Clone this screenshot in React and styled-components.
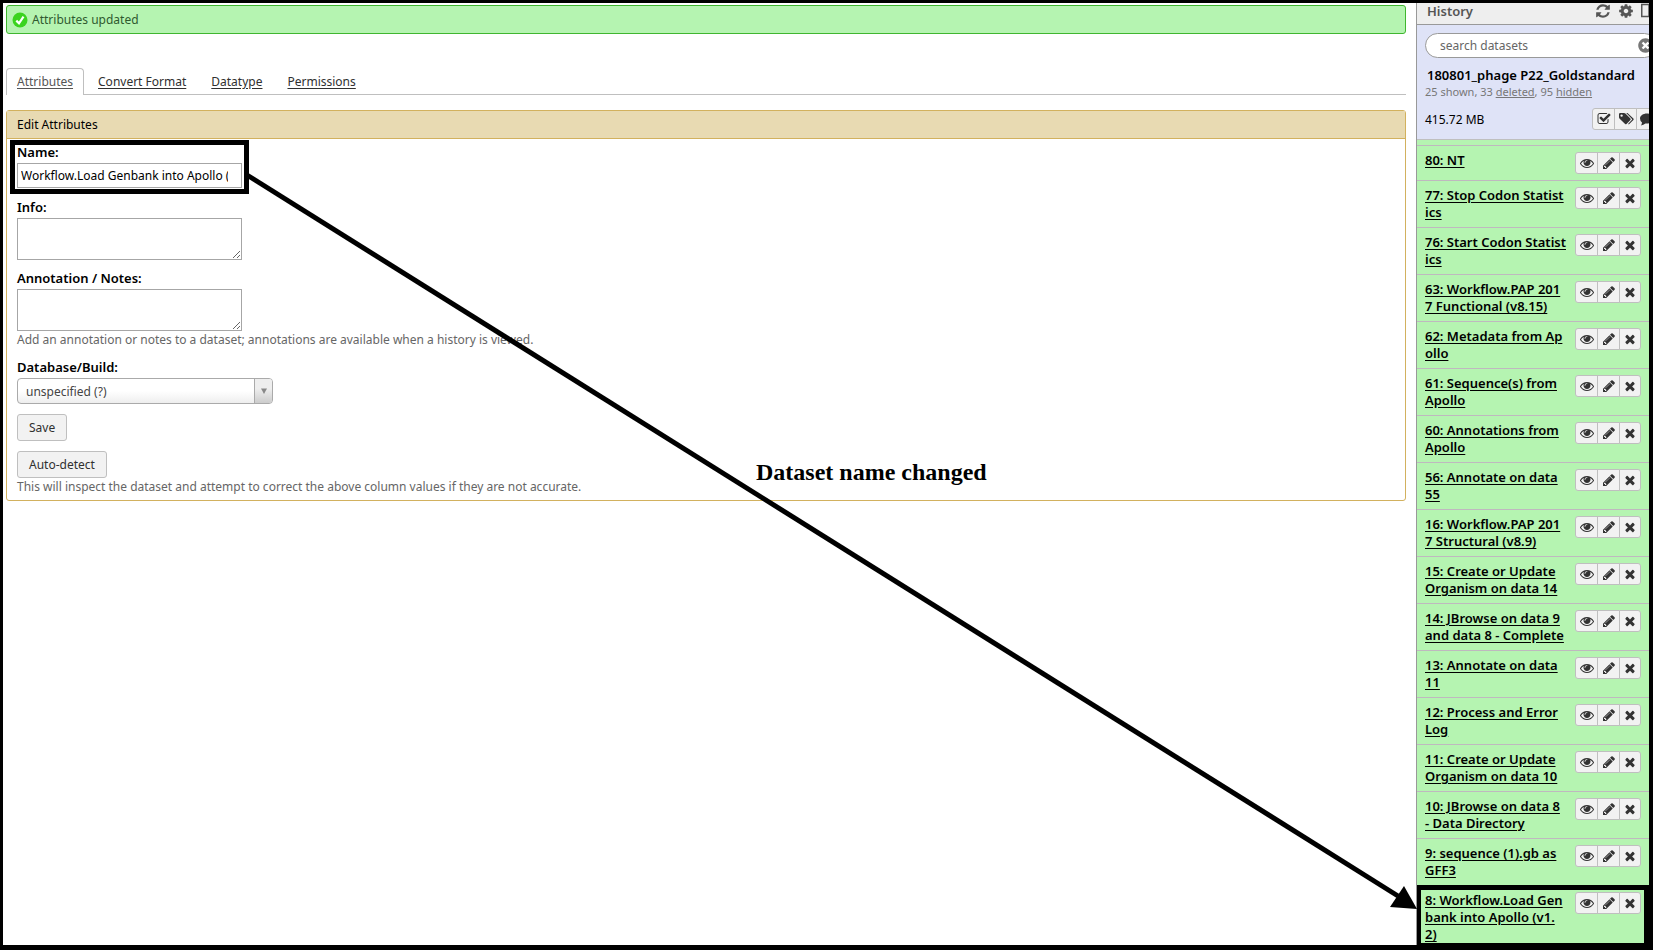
import React from "react";
import styled, { createGlobalStyle, css } from "styled-components";
import { FaTimesCircle } from "react-icons/fa";

const Global = createGlobalStyle`
  *, *::before, *::after { box-sizing: border-box; }
  body { margin: 0; background: #fff; }
  body, button, input, textarea, select {
    font-family: "Lucida Grande", "Noto Sans", "Open Sans", sans-serif;
    font-size: 12px;
  }
`;

const Frame = styled.div`
  position: relative;
  display: flex;
  height: 100vh;
  overflow: hidden;
  border: 3px solid #000;
  border-right-width: 4px;
  border-bottom-width: 5px;
  color: #000;
  line-height: 17px;
`;

/* ---------- centre column ---------- */

const Main = styled.main`
  flex: 1;
  min-width: 0;
  padding: 2px 10px 0 3px;
`;

const Message = styled.div`
  display: flex;
  align-items: center;
  gap: 4px;
  height: 29px;
  padding: 0 5px;
  border: 1px solid #3fb62f;
  border-radius: 3px;
  background: #b5f4b1;
  color: #2f5a2f;
`;

const Tabs = styled.nav`
  display: flex;
  height: 27px;
  margin-top: 34px;
  border-bottom: 1px solid #bfbfbf;
`;

const Tab = styled.a`
  height: 27px;
  margin-right: 3px;
  padding: 4px 10px 0;
  border: 1px solid transparent;
  border-bottom: 0;
  border-radius: 4px 4px 0 0;
  color: #303030;
  text-underline-offset: 2px;
  ${(p) =>
    p.$active &&
    css`
      border-color: #bfbfbf;
      background: #fff;
      color: #555;
    `}
`;

const Panel = styled.section`
  margin-top: 15px;
  border: 1px solid #d2b15e;
  border-radius: 3px;
`;

const PanelTitle = styled.h1`
  margin: 0;
  padding: 5px 10px;
  border-bottom: 1px solid #d2b15e;
  background: #e8dab2;
  font-size: 12px;
  font-weight: 400;
  line-height: 17px;
`;

const Form = styled.form`
  display: flex;
  flex-direction: column;
  align-items: flex-start;
  padding: 4px 10px;
`;

const Field = styled.div`
  position: relative;
  display: flex;
  flex-direction: column;
  margin-bottom: ${(p) => p.$gap || 9}px;
`;

const Label = styled.label`
  margin-bottom: 2px;
  font-size: 13px;
  font-weight: 600;
  line-height: 18px;
`;

const box = css`
  width: 225px;
  margin: 0;
  border: 1px solid #a6a6a6;
  border-radius: 0;
  background: #fff;
  color: #000;
  outline: none;
`;

const TextInput = styled.input`
  ${box}
  height: 25px;
  padding: 0 13px 0 3px;
`;

const TextArea = styled.textarea`
  ${box}
  height: 42px;
  padding: 3px;
  resize: both;
`;

const Help = styled.p`
  margin: 0;
  color: #666;
  line-height: 18px;
`;

const SelectBox = styled.div`
  position: relative;
  width: 256px;
`;

const Select = styled.select`
  display: block;
  width: 100%;
  height: 26px;
  padding: 0 28px 0 8px;
  appearance: none;
  border: 1px solid #aaa;
  border-radius: 4px;
  background: linear-gradient(to top, #eee 0%, #fff 50%);
  color: #444;
`;

const SelectArrow = styled.span`
  position: absolute;
  top: 1px;
  right: 1px;
  bottom: 1px;
  display: grid;
  place-items: center;
  width: 18px;
  border-left: 1px solid #aaa;
  border-radius: 0 3px 3px 0;
  background: linear-gradient(to top, #ccc 0%, #eee 60%);
  pointer-events: none;
`;

const Button = styled.button`
  height: 27px;
  margin-bottom: ${(p) => p.$gap || 0}px;
  padding: 0 11px;
  border: 1px solid #bfbfbf;
  border-radius: 3px;
  background: #f2f2f2;
  color: #303030;
`;

/* ---------- history column ---------- */

const History = styled.aside`
  flex: none;
  width: 233px;
  overflow: hidden;
  border-left: 1px solid #999;
  background: #b5f4b1;
`;

const HistoryInner = styled.div`
  width: 256px;
`;

const HistoryHeader = styled.header`
  display: flex;
  height: 22px;
  padding: 0 0 0 10px;
  border-bottom: 1px solid #999;
  background: #eee;
  color: #555;
`;

const HistoryTitle = styled.h2`
  width: 168px;
  margin: 0;
  font-size: 13px;
  font-weight: 600;
  line-height: 17px;
`;

const HeaderTools = styled.div`
  display: flex;
  gap: 7px;
`;

const BareButton = styled.button`
  display: flex;
  height: 15px;
  padding: 0;
  border: 0;
  background: none;
  color: #555;
`;

const Controls = styled.div`
  height: 115px;
  padding: 8px 0 0 8px;
  border-bottom: 1px solid #bfbfbf;
  background: #dfe3f7;
`;

const Search = styled.div`
  position: relative;
  width: 232px;
`;

const SearchInput = styled.input`
  display: block;
  width: 100%;
  height: 25px;
  padding: 0 30px 0 14px;
  border: 1px solid #999;
  border-radius: 13px;
  background: #fff;
  outline: none;
  &::placeholder { color: #666; opacity: 1; }
`;

const ClearButton = styled(BareButton)`
  position: absolute;
  top: 5px;
  left: 213px;
  color: #777;
`;

const HistoryName = styled.h3`
  margin: 9px 0 0;
  padding-left: 2px;
  font-size: 13px;
  font-weight: 600;
  line-height: 17px;
  white-space: nowrap;
`;

const Counts = styled.div`
  color: #777;
  font-size: 11px;
  line-height: 16px;
  a { color: inherit; }
`;

const SizeRow = styled.div`
  display: flex;
  align-items: center;
  justify-content: space-between;
  width: 233px;
  margin-top: 8px;
`;

const ButtonGroup = styled.div`
  display: flex;
  flex: none;
`;

const IconButton = styled.button`
  display: grid;
  place-items: center;
  width: 23px;
  height: 22px;
  padding: 0;
  border: 1px solid #bfbfbf;
  background: #f2f2f2;
  color: #333;
  & + & { margin-left: -1px; }
  &:first-child { border-radius: 3px 0 0 3px; }
  &:last-child { width: 22px; border-radius: 0 3px 3px 0; }
`;

const List = styled.ul`
  margin: 0;
  padding: 5px 0 0;
  list-style: none;
`;

const Item = styled.li`
  position: relative;
  display: flex;
  justify-content: space-between;
  align-items: flex-start;
  width: 232px;
  padding: 6px 8px;
  border-top: 1px solid #bfb8bf;
`;

const ItemLink = styled.a`
  color: #000;
  font-size: 13px;
  font-weight: 600;
  text-underline-offset: 2px;
  white-space: pre;
`;

/* ---------- annotations over the page ---------- */

const Highlight = styled.div`
  position: absolute;
  inset: ${(p) => p.$inset};
  border: 5px solid #000;
  pointer-events: none;
`;

const ArrowLayer = styled.svg`
  position: absolute;
  top: -3px;
  left: -3px;
  overflow: visible;
  pointer-events: none;
`;

const Caption = styled.div`
  position: absolute;
  top: 456px;
  left: 753px;
  font-family: "Liberation Serif", serif;
  font-size: 24px;
  font-weight: 700;
  line-height: 27px;
  white-space: nowrap;
`;

const paths = {
  eye: "M1664 960q-152-236-381-353 61 104 61 225 0 185-131.5 316.5t-316.5 131.5-316.5-131.5-131.5-316.5q0-121 61-225-229 117-381 353 133 205 333.5 326.5t434.5 121.5 434.5-121.5 333.5-326.5zm-720-384q0-20-14-34t-34-14q-125 0-214.5 89.5t-89.5 214.5q0 20 14 34t34 14 34-14 14-34q0-86 61-147t147-61q20 0 34-14t14-34zm848 384q0 34-20 69-140 230-376.5 368.5t-499.5 138.5-499.5-139-376.5-368q-20-35-20-69t20-69q140-229 376.5-368t499.5-139 499.5 139 376.5 368q20 35 20 69z",
  pencil: "M491 1536l91-91-235-235-91 91v107h128v128h107zm523-928q0-22-22-22-10 0-17 7l-542 542q-7 7-7 17 0 22 22 22 10 0 17-7l542-542q7-7 7-17zm-54-192l416 416-832 832h-416v-416zm683 96q0 53-37 90l-166 166-416-416 166-165q36-38 90-38 53 0 91 38l235 234q37 39 37 91z",
  times: "M1490 1322q0 40-28 68l-136 136q-28 28-68 28t-68-28l-294-294-294 294q-28 28-68 28t-68-28l-136-136q-28-28-28-68t28-68l294-294-294-294q-28-28-28-68t28-68l136-136q28-28 68-28t68 28l294 294 294-294q28-28 68-28t68 28l136 136q28 28 28 68t-28 68l-294 294 294 294q28 28 28 68z",
  refresh: "M1639 1056q0 5-1 7-64 268-268 434.5t-478 166.5q-146 0-282.5-55t-243.5-157l-129 129q-19 19-45 19t-45-19-19-45v-448q0-26 19-45t45-19h448q26 0 45 19t19 45-19 45l-137 137q71 66 161 102t187 36q134 0 250-65t186-179q11-17 53-117 8-23 30-23h192q13 0 22.5 9.5t9.5 22.5zm25-800v448q0 26-19 45t-45 19h-448q-26 0-45-19t-19-45 19-45l138-138q-148-137-349-137-134 0-250 65t-186 179q-11 17-53 117-8 23-30 23h-199q-13 0-22.5-9.5t-9.5-22.5v-7q65-268 270-434.5t480-166.5q146 0 284 55.5t245 156.5l130-129q19-19 45-19t45 19 19 45z",
  cog: "M1152 896q0-106-75-181t-181-75-181 75-75 181 75 181 181 75 181-75 75-181zm512-109v222q0 12-8 23t-20 13l-185 28q-19 54-39 91 35 50 107 138 10 12 10 25t-9 23q-27 37-99 108t-94 71q-12 0-26-9l-138-108q-44 23-91 38-16 136-29 186-7 28-36 28h-222q-14 0-24.5-8.5t-11.5-21.5l-28-184q-49-16-90-37l-141 107q-10 9-25 9-14 0-25-11-126-114-165-168-7-10-7-23 0-12 8-23 15-21 51-66.5t54-70.5q-27-50-41-99l-183-27q-13-2-21-12.5t-8-23.5v-222q0-12 8-23t19-13l186-28q14-46 39-92-40-57-107-138-10-12-10-24 0-10 9-23 26-36 98.5-107.5t94.5-71.5q13 0 26 10l138 107q44-23 91-38 16-136 29-186 7-28 36-28h222q14 0 24.5 8.5t11.5 21.5l28 184q49 16 90 37l142-107q9-9 24-9 13 0 25 10 129 119 165 170 7 8 7 22 0 12-8 23-15 21-51 66.5t-54 70.5q26 50 41 98l183 28q13 2 21 12.5t8 23.5z",
  check: "M1472 930v318q0 119-84.5 203.5t-203.5 84.5h-832q-119 0-203.5-84.5t-84.5-203.5v-832q0-119 84.5-203.5t203.5-84.5h832q63 0 117 25 15 7 18 23 3 17-9 29l-49 49q-10 10-23 10-3 0-9-2-23-6-45-6h-832q-66 0-113 47t-47 113v832q0 66 47 113t113 47h832q66 0 113-47t47-113v-254q0-13 9-22l64-64q10-10 23-10 6 0 12 3 20 8 20 29zm231-489l-814 814q-24 24-57 24t-57-24l-430-430q-24-24-24-57t24-57l110-110q24-24 57-24t57 24l263 263 647-647q24-24 57-24t57 24l110 110q24 24 24 57t-24 57z",
};

const Icon = ({ name, size = 14 }) => (
  <svg width={size} height={size} viewBox="0 0 1792 1792" fill="currentColor" aria-hidden="true">
    <path d={paths[name]} />
  </svg>
);

const TagsIcon = () => (
  <svg width="16" height="14" viewBox="0 0 16 14" fill="currentColor" aria-hidden="true">
    <path
      fillRule="evenodd"
      d="M1 2.2Q1 1 2.2 1H6q.8 0 1.4.6l5 5q.6.7 0 1.4L8.5 12q-.7.6-1.4 0l-5.4-5.3Q1 6 1 5.2zM3.6 2.4a1.2 1.2 0 1 0 0 2.4 1.2 1.2 0 0 0 0-2.4z"
    />
    <path d="M8.2 1h1.3l5.9 5.6q.6.7 0 1.4L11.3 12q-.7.6-1.3 0l4-4.3q.4-.4 0-.8z" />
  </svg>
);

const CommentIcon = () => (
  <svg width="16" height="14" viewBox="0 0 16 14" fill="currentColor" aria-hidden="true">
    <path d="M8 1.5c4 0 7 2.3 7 5s-3 5-7 5q-.8 0-1.6-.1-1.9 1.7-4.6 2 1.1-1.2 1.2-3Q1 8.900 1 6.5c0-2.700 3-5 7-5z" />
  </svg>
);

const datasets = [
  "80: NT",
  "77: Stop Codon Statist\nics",
  "76: Start Codon Statist\nics",
  "63: Workflow.PAP 201\n7 Functional (v8.15)",
  "62: Metadata from Ap\nollo",
  "61: Sequence(s) from\nApollo",
  "60: Annotations from\nApollo",
  "56: Annotate on data\n55",
  "16: Workflow.PAP 201\n7 Structural (v8.9)",
  "15: Create or Update\nOrganism on data 14",
  "14: JBrowse on data 9\nand data 8 - Complete",
  "13: Annotate on data\n11",
  "12: Process and Error\nLog",
  "11: Create or Update\nOrganism on data 10",
  "10: JBrowse on data 8\n- Data Directory",
  "9: sequence (1).gb as\nGFF3",
  "8: Workflow.Load Gen\nbank into Apollo (v1.\n2)",
];

const Dataset = ({ title, highlighted }) => (
  <Item>
    <ItemLink href="#">{title}</ItemLink>
    <ButtonGroup>
      <IconButton aria-label="View data"><Icon name="eye" /></IconButton>
      <IconButton aria-label="Edit attributes"><Icon name="pencil" /></IconButton>
      <IconButton aria-label="Delete"><Icon name="times" /></IconButton>
    </ButtonGroup>
    {highlighted && <Highlight $inset="-1px 0 1px -1px" />}
  </Item>
);

export default function App() {
  return (
    <Frame>
      <Global />
      <Main>
        <Message role="status">
          <svg width="16" height="16" viewBox="0 0 16 16" aria-hidden="true">
            <circle cx="8" cy="8" r="7.5" fill="#3ad31f" />
            <path d="M4.3 8.6 7 11.3 11.5 4.6" fill="none" stroke="#fff" strokeWidth="2.2" />
          </svg>
          Attributes updated
        </Message>

        <Tabs>
          <Tab href="#" $active>Attributes</Tab>
          <Tab href="#">Convert Format</Tab>
          <Tab href="#">Datatype</Tab>
          <Tab href="#">Permissions</Tab>
        </Tabs>

        <Panel>
          <PanelTitle>Edit Attributes</PanelTitle>
          <Form onSubmit={(e) => e.preventDefault()}>
            <Field $gap={10}>
              <Label htmlFor="name">Name:</Label>
              <TextInput id="name" defaultValue="Workflow.Load Genbank into Apollo (v1.2)" />
              <Highlight $inset="-3px -7px -6px -7px" />
            </Field>
            <Field>
              <Label htmlFor="info">Info:</Label>
              <TextArea id="info" />
            </Field>
            <Field>
              <Label htmlFor="notes">Annotation / Notes:</Label>
              <TextArea id="notes" />
              <Help>Add an annotation or notes to a dataset; annotations are available when a history is viewed.</Help>
            </Field>
            <Field $gap={10}>
              <Label htmlFor="build">Database/Build:</Label>
              <SelectBox>
                <Select id="build">
                  <option>unspecified (?)</option>
                </Select>
                <SelectArrow>
                  <svg width="6" height="6" viewBox="0 0 6 6" aria-hidden="true">
                    <path d="M0 0.5h6L3 6z" fill="#888" />
                  </svg>
                </SelectArrow>
              </SelectBox>
            </Field>
            <Button type="submit" $gap={10}>Save</Button>
            <Button type="button">Auto-detect</Button>
            <Help>This will inspect the dataset and attempt to correct the above column values if they are not accurate.</Help>
          </Form>
        </Panel>
      </Main>

      <History>
        <HistoryInner>
          <HistoryHeader>
            <HistoryTitle>History</HistoryTitle>
            <HeaderTools>
              <BareButton aria-label="Refresh history"><Icon name="refresh" size={16} /></BareButton>
              <BareButton aria-label="History options"><Icon name="cog" size={16} /></BareButton>
              <BareButton aria-label="View all histories">
                <svg width="16" height="15" viewBox="0 0 16 15" fill="none" stroke="currentColor" strokeWidth="1.5" aria-hidden="true">
                  <path d="M.75 1.5h14v12H.75zM8 1.5v12" />
                </svg>
              </BareButton>
            </HeaderTools>
          </HistoryHeader>

          <Controls>
            <Search>
              <SearchInput aria-label="search datasets" placeholder="search datasets" />
              <ClearButton aria-label="Clear search"><FaTimesCircle size={15} /></ClearButton>
            </Search>
            <HistoryName>180801_phage P22_Goldstandard</HistoryName>
            <Counts>
              25 shown, 33 <a href="#">deleted</a>, 95 <a href="#">hidden</a>
            </Counts>
            <SizeRow>
              <span>415.72 MB</span>
              <ButtonGroup>
                <IconButton aria-label="Select datasets"><Icon name="check" /></IconButton>
                <IconButton aria-label="Edit tags"><TagsIcon /></IconButton>
                <IconButton aria-label="Edit annotation"><CommentIcon /></IconButton>
              </ButtonGroup>
            </SizeRow>
          </Controls>

          <List>
            {datasets.map((title, i) => (
              <Dataset key={title} title={title} highlighted={i === datasets.length - 1} />
            ))}
          </List>
        </HistoryInner>
      </History>

      <ArrowLayer width="1653" height="950" viewBox="0 0 1653 950" aria-hidden="true">
        <path d="M247 175 1398 896" stroke="#000" strokeWidth="5" />
        <path d="M1417 909 1404 886 1390 907z" />
      </ArrowLayer>
      <Caption>Dataset name changed</Caption>
    </Frame>
  );
}
